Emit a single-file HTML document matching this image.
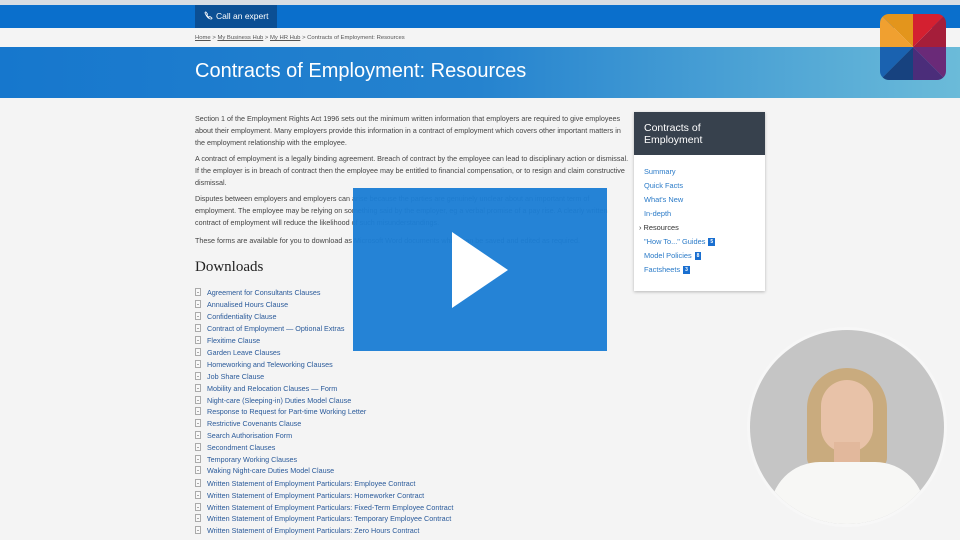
<!DOCTYPE html>
<html><head><meta charset="utf-8"><style>
*{margin:0;padding:0;box-sizing:border-box}
body{width:960px;height:540px;overflow:hidden;background:#f4f4f4;font-family:"Liberation Sans",Arial,sans-serif;position:relative}
.a{position:absolute;white-space:nowrap}
.p{font-size:7.2px;color:#444;left:195px}
.li{font-size:7.2px;color:#2a5a9a;left:207px}
.ic{position:absolute;left:195px;width:6px;height:8px;border:1px solid #aaa;background:#f8f8f8}
.ic::after{content:"";position:absolute;left:1px;top:3px;width:2px;height:2px;border-top:1px solid #aaa;border-bottom:1px solid #aaa}
.nav{font-size:7.4px;color:#2b7bc8;left:644px}
.b{display:inline-block;background:#1a6fd0;color:#fff;font-size:5px;padding:1px 2px;margin-left:3px;vertical-align:1px;font-weight:bold}
</style></head><body>
<div class="a" style="left:0;top:0;width:960px;height:5px;background:#d8dde3"></div>
<div class="a" style="left:0;top:5px;width:960px;height:23px;background:#0a6fcc"></div>
<div class="a" style="left:195px;top:5px;width:82px;height:23px;background:#0b4f94;color:#fff;font-size:8.5px;line-height:23px;padding-left:9px">
<svg width="9" height="9" viewBox="0 0 10 10" style="vertical-align:-1px;margin-right:3px"><path d="M2 1 L4 3.5 L3 4.5 Q4.5 6.5 5.5 7 L6.5 6 L9 8 L8 9 Q4 9 1 2 Z" fill="none" stroke="#fff" stroke-width="0.9"/></svg>Call an expert</div>
<div class="a" style="left:0;top:28px;width:960px;height:19px;background:#f4f4f4"></div>
<div class="a" style="left:195px;top:35px;font-size:5.9px;color:#555"><u>Home</u> &gt; <u>My Business Hub</u> &gt; <u>My HR Hub</u> &gt; Contracts of Employment: Resources</div>
<div class="a" style="left:0;top:47px;width:960px;height:51px;background:linear-gradient(90deg,#1677cd 0%,#2583cf 50%,#6bbbd9 100%)"></div>
<div class="a" style="left:195px;top:60px;font-size:20px;color:#fff">Contracts of Employment: Resources</div>

<div class="a p" style="top:114px">Section 1 of the Employment Rights Act 1996 sets out the minimum written information that employers are required to give employees</div>
<div class="a p" style="top:126px">about their employment. Many employers provide this information in a contract of employment which covers other important matters in</div>
<div class="a p" style="top:138px">the employment relationship with the employee.</div>
<div class="a p" style="top:154px">A contract of employment is a legally binding agreement. Breach of contract by the employee can lead to disciplinary action or dismissal.</div>
<div class="a p" style="top:166px">If the employer is in breach of contract then the employee may be entitled to financial compensation, or to resign and claim constructive</div>
<div class="a p" style="top:178px">dismissal.</div>
<div class="a p" style="top:194px">Disputes between employers and employers can arise because the parties are genuinely unclear about an important term of</div>
<div class="a p" style="top:206px">employment. The employee may be relying on something said by the employer, eg a verbal promise of a pay rise. A clearly written</div>
<div class="a p" style="top:218px">contract of employment will reduce the likelihood of such misunderstandings.</div>
<div class="a p" style="top:236px">These forms are available for you to download as Microsoft Word documents which can be saved and edited as required.</div>
<div class="a" style="left:195px;top:259px;font-size:15px;color:#222;font-family:'Liberation Serif',serif">Downloads</div>

<div class="a li" style="top:288px">Agreement for Consultants Clauses</div>
<div class="a li" style="top:300px">Annualised Hours Clause</div>
<div class="a li" style="top:312px">Confidentiality Clause</div>
<div class="a li" style="top:324px">Contract of Employment — Optional Extras</div>
<div class="a li" style="top:336px">Flexitime Clause</div>
<div class="a li" style="top:348px">Garden Leave Clauses</div>
<div class="a li" style="top:360px">Homeworking and Teleworking Clauses</div>
<div class="a li" style="top:372px">Job Share Clause</div>
<div class="a li" style="top:384px">Mobility and Relocation Clauses — Form</div>
<div class="a li" style="top:396px">Night-care (Sleeping-in) Duties Model Clause</div>
<div class="a li" style="top:407px">Response to Request for Part-time Working Letter</div>
<div class="a li" style="top:419px">Restrictive Covenants Clause</div>
<div class="a li" style="top:431px">Search Authorisation Form</div>
<div class="a li" style="top:443px">Secondment Clauses</div>
<div class="a li" style="top:455px">Temporary Working Clauses</div>
<div class="a li" style="top:466px">Waking Night-care Duties Model Clause</div>
<div class="a li" style="top:479px">Written Statement of Employment Particulars: Employee Contract</div>
<div class="a li" style="top:491px">Written Statement of Employment Particulars: Homeworker Contract</div>
<div class="a li" style="top:503px">Written Statement of Employment Particulars: Fixed-Term Employee Contract</div>
<div class="a li" style="top:514px">Written Statement of Employment Particulars: Temporary Employee Contract</div>
<div class="a li" style="top:526px">Written Statement of Employment Particulars: Zero Hours Contract</div>
<div class="ic" style="top:288px"></div><div class="ic" style="top:300px"></div><div class="ic" style="top:312px"></div><div class="ic" style="top:324px"></div><div class="ic" style="top:336px"></div><div class="ic" style="top:348px"></div><div class="ic" style="top:360px"></div><div class="ic" style="top:372px"></div><div class="ic" style="top:384px"></div><div class="ic" style="top:396px"></div><div class="ic" style="top:407px"></div><div class="ic" style="top:419px"></div><div class="ic" style="top:431px"></div><div class="ic" style="top:443px"></div><div class="ic" style="top:455px"></div><div class="ic" style="top:466px"></div><div class="ic" style="top:479px"></div><div class="ic" style="top:491px"></div><div class="ic" style="top:503px"></div><div class="ic" style="top:514px"></div><div class="ic" style="top:526px"></div>

<div class="a" style="left:634px;top:112px;width:131px;height:179px;background:#fff;box-shadow:0 1px 3px rgba(0,0,0,.25)"></div>
<div class="a" style="left:634px;top:112px;width:131px;height:43px;background:#37414d;color:#fff;font-size:10.5px;line-height:11.5px;padding:11px 0 0 10px;white-space:normal">Contracts of<br>Employment</div>
<div class="a nav" style="top:167px">Summary</div>
<div class="a nav" style="top:181px">Quick Facts</div>
<div class="a nav" style="top:195px">What's New</div>
<div class="a nav" style="top:209px">In-depth</div>
<div class="a nav" style="top:223px;color:#333;left:639px">›&nbsp;Resources</div>
<div class="a nav" style="top:237px">"How To..." Guides<span class="b">5</span></div>
<div class="a nav" style="top:251px">Model Policies<span class="b">8</span></div>
<div class="a nav" style="top:265px">Factsheets<span class="b">3</span></div>

<div class="a" style="left:353px;top:188px;width:254px;height:163px;background:rgba(28,126,212,0.96)"></div>
<svg class="a" style="left:450px;top:230px" width="60" height="80"><path d="M2 2 L58 40 L2 78 Z" fill="#fff"/></svg>

<svg class="a" style="left:880px;top:14px" width="66" height="66" viewBox="0 0 66 66">
<defs><clipPath id="c"><rect width="66" height="66" rx="9"/></clipPath></defs>
<g clip-path="url(#c)">
<path d="M0 0H33V33Z" fill="#e3951c"/><path d="M0 0V33H33Z" fill="#f0a030"/>
<path d="M33 0H66L33 33Z" fill="#d42030"/><path d="M66 0V33H33Z" fill="#a51e3a"/>
<path d="M0 33H33L0 66Z" fill="#1a62b0"/><path d="M0 66H33V33Z" fill="#17427f"/>
<path d="M33 33H66V66Z" fill="#6a2a78"/><path d="M33 33V66H66Z" fill="#4b2d7a"/>
</g></svg>

<div class="a" style="left:747px;top:327px;width:200px;height:200px;border-radius:50%;background:#f7f7f7"></div>
<div class="a" style="left:750px;top:330px;width:194px;height:194px;border-radius:50%;background:#c5c5c5;overflow:hidden">
<div class="a" style="left:57px;top:38px;width:80px;height:100px;border-radius:40px 40px 10px 10px;background:#c9ab7e"></div>
<div class="a" style="left:71px;top:50px;width:52px;height:72px;border-radius:26px 26px 24px 24px;background:#e8c2a8"></div>
<div class="a" style="left:84px;top:112px;width:26px;height:28px;background:#e2b89c"></div>
<div class="a" style="left:20px;top:132px;width:155px;height:90px;border-radius:50px 50px 0 0;background:#f7f7f5"></div>
</div>
</body></html>
